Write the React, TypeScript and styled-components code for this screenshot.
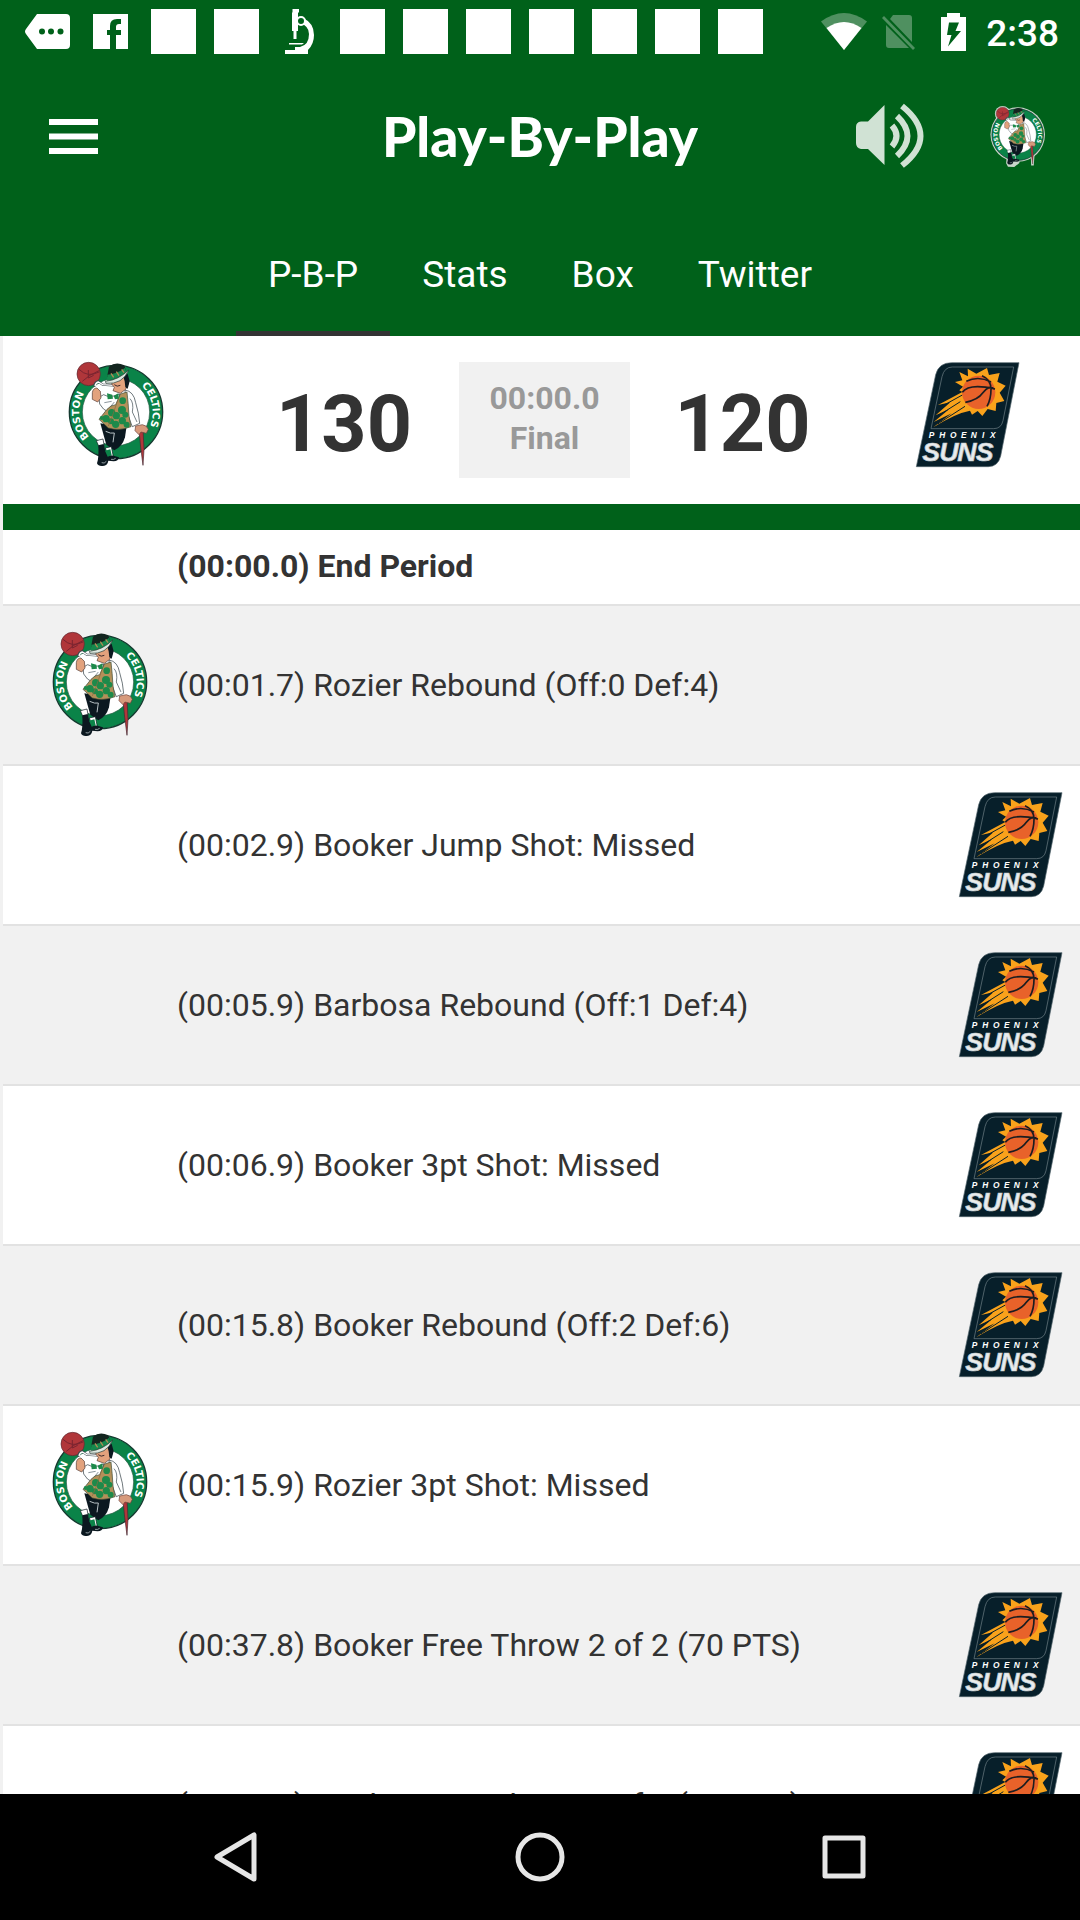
import React from "react";
import styled, { createGlobalStyle } from "styled-components";

const GREEN = "#00611a";
const INK = "#333333";
const MIST = "#f1f1f1";

const GlobalStyle = createGlobalStyle`
  * { box-sizing: border-box; }
  body { margin: 0; font-family: Roboto, "Noto Sans", sans-serif; color: ${INK}; }
  button { border: 0; padding: 0; background: none; font: inherit; color: inherit; cursor: pointer; }
  svg { display: block; overflow: visible; }
`;

const Screen = styled.div`
  display: flex;
  flex-direction: column;
  height: 100vh;
  background: #ffffff;
  overflow: hidden;
`;

const StatusBar = styled.div`
  display: flex;
  justify-content: space-between;
  align-items: center;
  height: 63px;
  flex: none;
  padding: 0 21px 0 25px;
  background: ${GREEN};
  color: #ffffff;
`;

const StatusGroup = styled.div<{ $gap: number }>`
  display: flex;
  align-items: center;
  gap: ${(p) => p.$gap}px;
`;

const StatusSlot = styled.span`
  display: flex;
  justify-content: center;
  width: 45px;
`;

const BlankIcon = styled.span`
  width: 45px;
  height: 45px;
  background: #ffffff;
`;

const Clock = styled.time`
  font-size: 37px;
  line-height: 40px;
  font-weight: 500;
  padding-top: 4px;
`;

const AppBar = styled.header`
  display: grid;
  grid-template-columns: 1fr auto 1fr;
  align-items: center;
  height: 146px;
  flex: none;
  padding: 0 33px;
  background: ${GREEN};
  color: #ffffff;
`;

const MenuButton = styled.button`
  justify-self: start;
  padding: 8px 16px;
`;

const Title = styled.h1`
  margin: 0;
  font-family: Lato, "Open Sans", sans-serif;
  font-weight: 900;
  font-size: 55px;
  line-height: 64px;
`;

const Actions = styled.div`
  display: flex;
  justify-content: flex-end;
  align-items: center;
  gap: 65px;
`;

const Tabs = styled.nav`
  display: flex;
  justify-content: center;
  flex: none;
  background: ${GREEN};
  color: #ffffff;
`;

const Tab = styled.button<{ $active?: boolean }>`
  padding: 42px 32px 32px;
  font-size: 37px;
  line-height: 48px;
  border-bottom: 5px solid ${(p) => (p.$active ? INK : "transparent")};
`;

const Content = styled.main`
  display: flex;
  flex-direction: column;
  flex: 1;
  min-height: 0;
  overflow: hidden;
  border-left: 3px solid ${MIST};
`;

const ScoreBoard = styled.section`
  display: grid;
  grid-template-columns: 226fr 230fr 171px 225fr 225fr;
  justify-items: center;
  align-items: start;
  padding: 26px 0 18px;
  border-bottom: 26px solid ${GREEN};
  flex: none;
`;

const Score = styled.strong`
  font-size: 79px;
  line-height: 124px;
  font-weight: 700;
`;

const GameClock = styled.div`
  width: 100%;
  padding: 16px 0 20px;
  background: ${MIST};
  color: #999999;
  text-align: center;
  font-size: 32px;
  line-height: 40px;
  font-weight: 700;
`;

const PlayList = styled.ol`
  margin: 0;
  padding: 0;
  list-style: none;
`;

const PlayRow = styled.li<{ $shaded: boolean; $heading?: boolean }>`
  display: grid;
  grid-template-columns: 105px 1fr 105px;
  column-gap: 24px;
  align-items: center;
  padding: ${(p) => (p.$heading ? "16px 17px 18px 45px" : "26px 17px 27px 45px")};
  border-bottom: 2px solid #e2e2e2;
  background: ${(p) => (p.$shaded ? MIST : "#ffffff")};
  font-size: 32px;
  line-height: 40px;
  font-weight: ${(p) => (p.$heading ? 700 : 400)};
`;

const SystemNav = styled.nav`
  display: flex;
  justify-content: center;
  gap: 178px;
  flex: none;
  height: 126px;
  background: #000000;
`;

const NavButton = styled.button`
  display: flex;
  align-items: center;
  justify-content: center;
  width: 126px;
`;

function CelticsLogo({ size = 105, outlined = false }: { size?: number; outlined?: boolean }) {
  const id = React.useId();
  return (
    <svg width={size} height={size} viewBox="39 36 315 315" role="img" aria-label="Boston Celtics">
      <defs>
        <path id={id + "b"} d="M140 281A110 110 0 0 1 121 104" />
        <path id={id + "c"} d="M240 86A110 110 0 0 1 277 260" />
      </defs>
      {outlined && (
        <g fill="#c9d6cb">
          <circle cx="195" cy="186" r="148" />
          <circle cx="113" cy="72" r="42" />
          <path d="M136 300h24v22l44-4v22l-28 22-34-2-10-18zM266 300h20l-4 54h-14z" />
        </g>
      )}
      <circle cx="195" cy="186" r="140" fill="#0a8348" stroke="#14392f" strokeWidth="4" />
      <circle cx="195" cy="186" r="101" fill="#fff" stroke="#2b5a45" strokeWidth="2" />
      <g fill="#fff" fontFamily='"DejaVu Sans", sans-serif' fontWeight="700" fontSize="30" textAnchor="middle">
        <text><textPath href={"#" + id + "b"} startOffset="50%">BOSTON</textPath></text>
        <text><textPath href={"#" + id + "c"} startOffset="50%">CELTICS</textPath></text>
      </g>
      <circle cx="113" cy="72" r="35" fill="#b0363a" stroke="#5b2930" strokeWidth="2" />
      <path d="M84 58q26 26 60 8M94 94q20-20 50-32M112 60v24l16-8" fill="none" stroke="#7a2430" strokeWidth="3" />
      {/* legs and boots */}
      <path d="M148 220L226 234L222 262Q214 290 190 301L166 284L158 256Z" fill="#0b1820" />
      <path d="M164 244q16 8 26 5l-4 28" fill="none" stroke="#b8c2c6" strokeWidth="3" />
      <path d="M136 272l20-5 4 22-14 6zM163 294l18-4 6 30-14 2z" fill="#fff" stroke="#0b1820" strokeWidth="2" />
      <path d="M142 286l16-4q2 18 12 32 18 2 34 8-2 12-16 12l-16-2q-2 14-16 16-14 2-18-8 6-16 4-54z" fill="#0b1820" />
      <path d="M162 302l16-4 4 18-12 4z" fill="#0a8348" />
      <path d="M152 338q8 4 14-4M180 328q8 2 14-3" fill="none" stroke="#d7dfe2" strokeWidth="2" />
      {/* sleeves */}
      <path d="M144 142l14-8q14 10 30 4l18-6-2 40-32 14q-16-6-26-24z" fill="#fff" stroke="#27353b" strokeWidth="2" />
      <path d="M160 158l22-4M172 178l18-22" stroke="#526169" strokeWidth="2" />
      <path d="M222 120q26 4 32 38 10 32 12 62l-22 10q-10-24-18-50z" fill="#fff" stroke="#27353b" strokeWidth="2" />
      <path d="M237 146q12 12 7 40l14 30" fill="none" stroke="#35444b" strokeWidth="2" />
      {/* vest */}
      <path d="M208 132l20-6q4 34 6 72l6 32q-36 14-68 4l-28-26 24-30 12-10 14-4z" fill="#b3905a" stroke="#3a4a35" strokeWidth="2" />
      <g fill="#1d8a4a">
        <circle cx="182" cy="188" r="11" /><circle cx="196" cy="197" r="11" /><circle cx="213" cy="180" r="12" />
        <circle cx="223" cy="194" r="9" /><circle cx="215" cy="152" r="10" /><circle cx="165" cy="206" r="11" />
        <circle cx="194" cy="223" r="11" /><circle cx="180" cy="214" r="9" /><circle cx="214" cy="212" r="11" />
        <circle cx="227" cy="224" r="9" /><circle cx="152" cy="204" r="6" /><path d="M168 130l16 4 2 12-16 2zM188 138l14-8 2 16-12 2z" />
      </g>
      <path d="M202 146l-18 52-12 30" fill="none" stroke="#8a6a3c" strokeWidth="2" />
      {/* hand and pipe */}
      <path d="M124 128q2-14 14-14l10 10 2 20-10 12-16-8z" fill="#e2a27d" stroke="#513a32" strokeWidth="2" />
      <path d="M131 110q-2-12 10-16l14 10 32 2" fill="none" stroke="#3d494e" strokeWidth="7" />
      <path d="M132 108q2-10 10-12l13 8 32 2" fill="none" stroke="#fff" strokeWidth="4" />
      {/* face and hat */}
      <path d="M186 84l40-10 6 26-8 18-16 12-22-8 4-10-8-10z" fill="#e2a27d" stroke="#4b342e" strokeWidth="2" />
      <path d="M214 70l16 2 6 22-6 22-7-4-2-18z" fill="#0b1820" />
      <path d="M190 88l14 4M190 104q8 8 18 2M205 84l9-3" stroke="#3d2b2b" strokeWidth="3" fill="none" />
      <path d="M168 82L174 50Q194 34 220 46L226 66Z" fill="#13251f" />
      <path d="M169 74q28-2 53-20l5 16q-30 24-59 22z" fill="#16884d" />
      <path d="M180 70l8 12M196 65l8 12M212 58l7 10" stroke="#b08b54" strokeWidth="4" />
      <path d="M163 94q40-4 70-34-18 44-68 40z" fill="#dce7df" stroke="#1f3029" strokeWidth="2" />
      {/* cane */}
      <path d="M264 240l12-2 3 60-3 48-7-54z" fill="#b0363a" stroke="#442932" strokeWidth="2" />
      <path d="M254 228l20-4q14 2 18 14l-6 12-16-4-6 8-12-12z" fill="#d79a7c" stroke="#6b4038" strokeWidth="2" />
    </svg>
  );
}

function SunsLogo() {
  return (
    <svg width="105" height="105" viewBox="48 36 315 315" role="img" aria-label="Phoenix Suns">
      <path d="M158 38H360L305 318Q297 350 268 350H52L110 74Q119 38 158 38Z" fill="#071f2a" stroke="#53656c" strokeWidth="2" />
      <path d="M160 51H344L312 212Q307 236 284 236H96L129 80Q136 51 160 51Z" fill="none" stroke="#73838a" strokeWidth="2" />
      <path d="M206 56L232 71L264 54L270 75L302 69L295 95L320 107L302 128L316 153L292 159L290 183L266 177L250 198L236 183L219 194L213 182Q169 190 103 232L158 190L104 216L151 177L110 196L154 157L117 165L190 126L181 121L192 110L168 96L190 91L181 66L207 79Z" fill="#f9a21b" />
      <path d="M112 178l78-43M110 202l74-47M116 222l82-53" stroke="#071f2a" strokeWidth="3" />
      <circle cx="239" cy="127" r="50" fill="#e8622a" />
      <g fill="none" stroke="#1c1d20" strokeWidth="5">
        <path d="M202 94Q238 76 276 96M190 127Q210 99 288 117M199 157Q236 151 253 127T287 118M249 77Q276 88 276 118T264 169" />
      </g>
      <g fill="#fff" fontFamily='"Liberation Sans", Arial, sans-serif' fontWeight="700" fontStyle="italic">
        <text x="89 121 153 186 215 249 273" y="264" fontSize="25">PHOENIX</text>
        <g fontSize="80" fill="#e9ecee" stroke="#c3cacd" strokeWidth="2">
          <text x="70 121 175 230" y="334">SUNS</text>
        </g>
      </g>
    </svg>
  );
}

const ChatIcon = () => (
  <svg width="45" height="35" viewBox="0 0 45 35" aria-hidden="true">
    <path d="M12 0H41q4 0 4 4V31q0 4-4 4H12L1 20q-2-2.500 0-5z" fill="#fff" />
    <g fill={GREEN}><circle cx="17" cy="17.500" r="3" /><circle cx="26" cy="17.500" r="3" /><circle cx="35.500" cy="17.500" r="3" /></g>
  </svg>
);

const FacebookIcon = () => (
  <svg width="35" height="35" viewBox="0 0 35 35" aria-hidden="true">
    <path d="M0 0H35V35H23V21h5v-5h-5v-3q0-3 3-3h2V5h-4q-7 0-7 7v4h-3v5h3v14H0z" fill="#fff" />
  </svg>
);

const MicroscopeIcon = () => (
  <svg width="30" height="45" viewBox="0 0 30 45" aria-hidden="true">
    <path d="M7.500 0h6.500v3.500h-1V22h-1.500v8h-3v-8H7V3.500h.500zM0 41h10v-3h5q9-2 9-13 0-8-9-11l3-5q11 5 11 17 0 9-6 15v4H0zM4 34h15l-2 1.500H4z" fill="#fff" />
    <circle cx="16" cy="12" r="4" fill={GREEN} stroke="#fff" strokeWidth="2" />
  </svg>
);

const WifiIcon = () => (
  <svg width="46" height="37" viewBox="0 0 46 37" aria-hidden="true">
    <path d="M0 8.500Q23-8.500 46 8.500L23 37Z" fill="#4f9060" />
    <path d="M5.500 15Q23 3 40.500 15L23 37Z" fill="#fff" />
  </svg>
);

const NoSimIcon = () => (
  <svg width="34" height="36" viewBox="0 0 34 36" aria-hidden="true">
    <path d="M11 1H27q3 0 3 3V28L8 5zM4 11L27 34H7q-3 0-3-3zM0 4L2 2 33 34 31 36Z" fill="#4f9060" />
  </svg>
);

const BatteryIcon = () => (
  <svg width="25" height="38" viewBox="0 0 25 38" aria-hidden="true">
    <path d="M6 0H19V4H25V38H0V4H6z" fill="#fff" />
    <path d="M8 9.500H18L14.500 18H20L7 33.500 10.500 22H6z" fill={GREEN} />
  </svg>
);

const MenuIcon = () => (
  <svg width="49" height="35" viewBox="0 0 49 35" aria-hidden="true">
    <path d="M0 0H49V6H0zM0 14.500H49V20.500H0zM0 29H49V35H0z" fill="#fff" />
  </svg>
);

const SpeakerIcon = () => (
  <svg width="68" height="64" viewBox="0 0 68 64" aria-hidden="true">
    <path d="M5 17.500H12L28.500 1V61L12 45H5Q0 44 0 39V23Q0 18 5 17.500z" fill="#d0e2d4" />
    <g fill="none" stroke="#d0e2d4" strokeWidth="6">
      <path d="M36 21.500Q45 32 36 42.500" /><path d="M41 12Q62 32 41 52" /><path d="M46 2Q83 32 46 61.500" />
    </g>
  </svg>
);

type Team = "celtics" | "suns";
type Play = { time: string; text: string; team?: Team };

const plays: Play[] = [
  { time: "00:00.0", text: "End Period" },
  { time: "00:01.7", text: "Rozier Rebound (Off:0 Def:4)", team: "celtics" },
  { time: "00:02.9", text: "Booker Jump Shot: Missed", team: "suns" },
  { time: "00:05.9", text: "Barbosa Rebound (Off:1 Def:4)", team: "suns" },
  { time: "00:06.9", text: "Booker 3pt Shot: Missed", team: "suns" },
  { time: "00:15.8", text: "Booker Rebound (Off:2 Def:6)", team: "suns" },
  { time: "00:15.9", text: "Rozier 3pt Shot: Missed", team: "celtics" },
  { time: "00:37.8", text: "Booker Free Throw 2 of 2 (70 PTS)", team: "suns" },
  { time: "00:37.8", text: "Booker Free Throw 1 of 2 (69 PTS)", team: "suns" },
];

const tabs = ["P-B-P", "Stats", "Box", "Twitter"];

export default function App() {
  const [active, setActive] = React.useState(tabs[0]);
  return (
    <Screen>
      <GlobalStyle />
      <StatusBar>
        <StatusGroup $gap={18}>
          <StatusSlot><ChatIcon /></StatusSlot>
          <StatusSlot><FacebookIcon /></StatusSlot>
          <BlankIcon />
          <BlankIcon />
          <StatusSlot><MicroscopeIcon /></StatusSlot>
          {Array.from({ length: 7 }, (_, i) => <BlankIcon key={i} />)}
        </StatusGroup>
        <StatusGroup $gap={10}>
          <StatusSlot><WifiIcon /></StatusSlot>
          <StatusSlot><NoSimIcon /></StatusSlot>
          <StatusSlot><BatteryIcon /></StatusSlot>
          <Clock>2:38</Clock>
        </StatusGroup>
      </StatusBar>
      <AppBar>
        <MenuButton aria-label="Open menu"><MenuIcon /></MenuButton>
        <Title>Play-By-Play</Title>
        <Actions>
          <button aria-label="Listen live"><SpeakerIcon /></button>
          <button aria-label="Team home"><CelticsLogo size={58} outlined /></button>
        </Actions>
      </AppBar>
      <Tabs>
        {tabs.map((t) => (
          <Tab key={t} $active={t === active} onClick={() => setActive(t)}>{t}</Tab>
        ))}
      </Tabs>
      <Content>
        <ScoreBoard>
          <CelticsLogo />
          <Score>130</Score>
          <GameClock>
            <div>00:00.0</div>
            <div>Final</div>
          </GameClock>
          <Score>120</Score>
          <SunsLogo />
        </ScoreBoard>
        <PlayList>
          {plays.map((p, i) => (
            <PlayRow key={i} $shaded={i % 2 === 1} $heading={!p.team}>
              <span>{p.team === "celtics" && <CelticsLogo />}</span>
              <span>({p.time}) {p.text}</span>
              <span>{p.team === "suns" && <SunsLogo />}</span>
            </PlayRow>
          ))}
        </PlayList>
      </Content>
      <SystemNav>
        <NavButton aria-label="Back">
          <svg width="50" height="50" viewBox="0 0 50 50" fill="none" stroke="#e6e6e6" strokeWidth="5" strokeLinejoin="round">
            <path d="M43 3V47L6 25Z" />
          </svg>
        </NavButton>
        <NavButton aria-label="Home">
          <svg width="50" height="50" viewBox="0 0 50 50" fill="none" stroke="#e6e6e6" strokeWidth="5">
            <circle cx="25" cy="25" r="22" />
          </svg>
        </NavButton>
        <NavButton aria-label="Recent apps">
          <svg width="50" height="50" viewBox="0 0 50 50" fill="none" stroke="#e6e6e6" strokeWidth="5" strokeLinejoin="round">
            <path d="M6 6H44V44H6Z" />
          </svg>
        </NavButton>
      </SystemNav>
    </Screen>
  );
}
